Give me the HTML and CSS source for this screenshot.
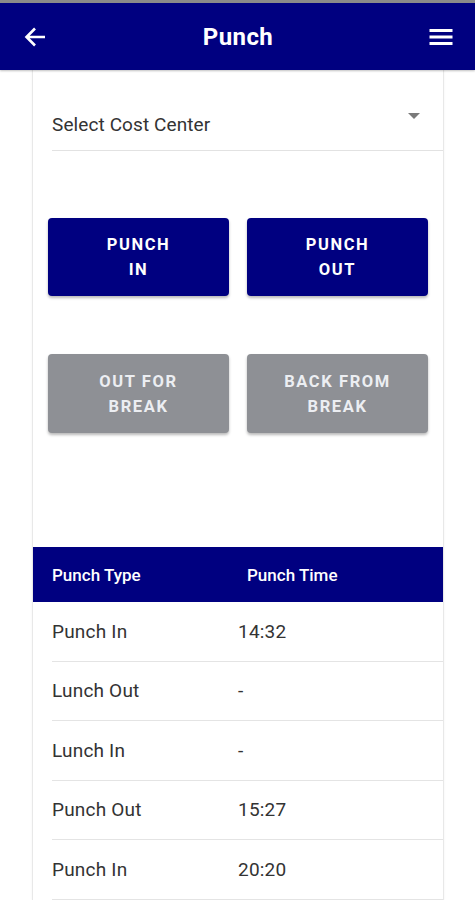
FILE: index.html
```html
<!DOCTYPE html>
<html>
<head>
<meta charset="utf-8">
<link rel="stylesheet" href="styles.css">
</head>
<body>
<header class="appbar">
  <svg class="icon back" width="24" height="24" viewBox="0 0 24 24"><path d="M22 12H3.5M12 3.5L3.5 12l8.5 8.5" fill="none" stroke="#fff" stroke-width="2.6" stroke-linecap="butt" stroke-linejoin="miter"/></svg>
  <h1 class="title">Punch</h1>
  <svg class="icon menu" width="24" height="24" viewBox="0 0 24 24"><rect x="0.5" y="4" width="23" height="3" fill="#fff"/><rect x="0.5" y="10.5" width="23" height="3" fill="#fff"/><rect x="0.5" y="17" width="23" height="3" fill="#fff"/></svg>
</header>
<main class="card">
  <div class="select">
    <span class="select-label">Select Cost Center</span>
    <span class="caret"></span>
  </div>
  <div class="buttons">
    <button class="btn primary">PUNCH<br>IN</button>
    <button class="btn primary">PUNCH<br>OUT</button>
    <button class="btn disabled">OUT FOR<br>BREAK</button>
    <button class="btn disabled">BACK FROM<br>BREAK</button>
  </div>
  <div class="table">
    <div class="thead">
      <span class="col1">Punch Type</span>
      <span class="col2">Punch Time</span>
    </div>
    <div class="row"><span class="c1">Punch In</span><span class="c2">14:32</span></div>
    <div class="row"><span class="c1">Lunch Out</span><span class="c2">-</span></div>
    <div class="row"><span class="c1">Lunch In</span><span class="c2">-</span></div>
    <div class="row"><span class="c1">Punch Out</span><span class="c2">15:27</span></div>
    <div class="row"><span class="c1">Punch In</span><span class="c2">20:20</span></div>
  </div>
</main>
</body>
</html>
```
FILE: styles.css
```css
* { box-sizing: border-box; }
html, body { margin: 0; padding: 0; background: #fff; }
body {
  font-family: Roboto, "Noto Sans", Arial, sans-serif;
  color: #333;
  width: 475px;
  height: 900px;
  overflow: hidden;
}
.appbar {
  height: 70px;
  border-top: 3px solid #8a8a8a;
  background: #000080;
  display: flex;
  align-items: center;
  justify-content: space-between;
  padding: 0 22px 0 23px;
  box-shadow: 0 1px 2px rgba(0,0,0,0.25);
  position: relative;
  z-index: 1;
}
.title {
  margin: 0;
  color: #fff;
  font-size: 24px;
  font-weight: 700;
  letter-spacing: 0.4px;
}
.back { width: 24px; height: 24px; }
.menu { width: 24px; height: 24px; }
.card {
  margin: 0 31px 0 32px;
  height: 830px;
  border-left: 1px solid #e8e8e8;
  border-right: 1px solid #e8e8e8;
  box-shadow: 0 0 2px rgba(0,0,0,0.06);
}
.select {
  margin-left: 19px;
  padding: 42px 23px 13px 0;
  display: flex;
  justify-content: space-between;
  align-items: flex-start;
  border-bottom: 1px solid #e2e2e2;
}
.select-label {
  font-size: 19px;
  line-height: 25px;
  color: #333;
  letter-spacing: 0.1px;
}
.caret {
  margin-top: 1px;
  width: 0;
  height: 0;
  border-left: 6px solid transparent;
  border-right: 6px solid transparent;
  border-top: 6px solid #7a7a7a;
}
.buttons {
  margin: 67px 15px 0 15px;
  display: grid;
  grid-template-columns: 181px 181px;
  column-gap: 18px;
  row-gap: 58px;
}
.btn {
  height: 78px;
  border: none;
  border-radius: 4px;
  color: #fff;
  font-family: Roboto, "Noto Sans", Arial, sans-serif;
  font-size: 16.5px;
  font-weight: 700;
  letter-spacing: 1.6px;
  line-height: 25px;
  padding: 0;
  box-shadow: 0 2px 3px rgba(0,0,0,0.28);
}
.primary { background: #000080; }
.disabled { background: #8e9095; color: #eceef2; height: 79px; }
.table { margin-top: 114px; }
.thead {
  height: 55px;
  background: #000080;
  color: #fff;
  display: flex;
  align-items: center;
  padding-left: 19px;
  font-size: 17px;
  font-weight: 500;
}
.thead .col1 { width: 195px; }
.row {
  margin-left: 19px;
  height: 59.5px;
  border-bottom: 1px solid #e4e4e4;
  display: flex;
  align-items: center;
  font-size: 19px;
  letter-spacing: 0.2px;
  color: #333;
}
.row .c1 { width: 186px; }
```
